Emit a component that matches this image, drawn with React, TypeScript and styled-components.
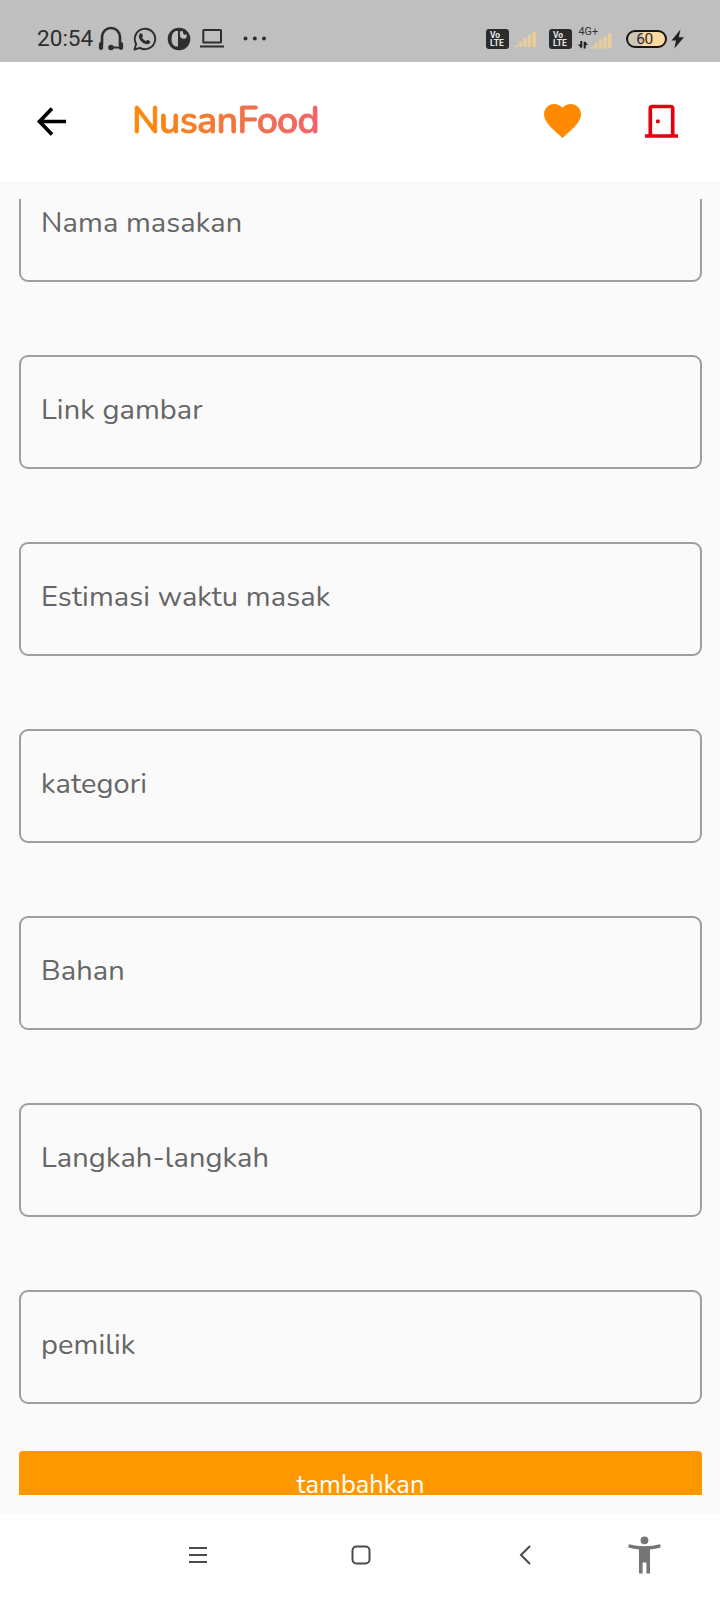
import React from 'react';
import styled, { createGlobalStyle } from 'styled-components';

const GlobalStyle = createGlobalStyle`
  * { box-sizing: border-box; }
  body { margin: 0; background: #fff; }
`;

const Screen = styled.div`
  width: 720px;
  height: 1600px;
  display: flex;
  flex-direction: column;
  overflow: hidden;
  background: #fff;
  font-family: Nunito, Lato, 'Open Sans', sans-serif;
`;

const StatusBar = styled.header`
  height: 62px;
  flex: none;
  display: flex;
  align-items: center;
  justify-content: space-between;
  padding: 15px 35px 0 37px;
  background: #bfbfbf;
  color: #2e2e2e;
  font-family: Roboto, sans-serif;
`;

const StatusGroup = styled.div`
  display: flex;
  align-items: center;
`;

const Clock = styled.time`
  width: 61px;
  font-size: 22.6px;
  line-height: 26px;
`;

const Icon = styled.svg<{ $gap?: number }>`
  display: block;
  flex: none;
  margin-left: ${(p) => p.$gap ?? 0}px;
`;

const VolteBadge = styled.span<{ $gap?: number }>`
  width: 23px;
  height: 20px;
  margin-left: ${(p) => p.$gap ?? 0}px;
  padding: 2px 0 0 4px;
  border-radius: 3px;
  background: #2c2c2c;
  color: #e6e6e6;
  font: 700 8.5px/8px Roboto, sans-serif;
  white-space: pre;
`;

const Battery = styled.span`
  width: 41px;
  height: 18px;
  margin-left: 13px;
  border: 2.5px solid #161616;
  border-radius: 9px;
  background: linear-gradient(90deg, #cdc5b5 0 38%, #fbd9a0 38%);
  color: #2a2a2a;
  font: 400 15.5px/14px Roboto, sans-serif;
  letter-spacing: -0.4px;
  text-align: center;
  padding-right: 4px;
`;

const AppBar = styled.div`
  height: 119px;
  flex: none;
  display: flex;
  align-items: center;
  padding: 0 42px 2px 36px;
`;

const Title = styled.h1`
  margin: 1px auto 0 62px;
  padding: 0 3px;
  font-size: 37.5px;
  line-height: 48px;
  font-weight: 600;
  letter-spacing: -0.75px;
  color: transparent;
  -webkit-text-stroke: 0.8px transparent;
  background: linear-gradient(90deg, #ff8a00, #ee704f 65%, #f4606a);
  background-clip: text;
  -webkit-background-clip: text;
`;

const IconButton = styled.button<{ $gap?: number }>`
  display: block;
  padding: 0;
  border: 0;
  background: none;
  margin-left: ${(p) => p.$gap ?? 0}px;
`;

const Content = styled.main`
  height: 1332px;
  flex: none;
  padding: 18px 18px 18px 19px;
  background: #fafafa;
`;

const ScrollArea = styled.form`
  height: 100%;
  overflow: hidden;
  display: flex;
  flex-direction: column;
`;

const FieldList = styled.div`
  display: flex;
  flex-direction: column;
  gap: 73px;
  margin-top: -31px;
`;

const Field = styled.label`
  height: 114px;
  flex: none;
  padding: 36px 20px;
  border: 2px solid #9e9e9e;
  border-radius: 9px;
  color: #666;
  font-size: 29px;
  line-height: 34px;
  letter-spacing: 0.09px;
`;

const SubmitButton = styled.button`
  height: 72px;
  flex: none;
  margin-top: 47px;
  padding: 0 0 5px;
  border: 0;
  border-radius: 4px;
  background: #ff9800;
  color: #fff;
  font: 400 25.5px/30px Nunito, Lato, sans-serif;
`;

const NavBar = styled.nav`
  height: 87px;
  flex: none;
  display: flex;
  align-items: center;
  padding: 0 59px 4px 188px;
`;

const fields = [
  'Nama masakan',
  'Link gambar',
  'Estimasi waktu masak',
  'kategori',
  'Bahan',
  'Langkah-langkah',
  'pemilik',
];

const Headphones = () => (
  <Icon width="26" height="26" viewBox="0 0 26 26" fill="none" stroke="#2e2e2e">
    <path d="M4 19V11a9 9 0 0 1 18 0v8" strokeWidth="2.6" />
    <path d="M3 18v4M23 18v4" strokeWidth="4.2" strokeLinecap="round" />
    <path d="M13 21.500h9" strokeWidth="2" />
    <circle cx="13" cy="21.500" r="2.800" fill="#2e2e2e" stroke="none" />
  </Icon>
);

const WhatsApp = () => (
  <Icon $gap={9} width="24" height="24" viewBox="0 0 24 24">
    <path
      fill="none"
      stroke="#2e2e2e"
      strokeWidth="1.9"
      strokeLinejoin="round"
      d="M1.500 22.500l1.600-5.600a10.200 10.200 0 1 1 3.900 3.900z"
    />
    <path
      fill="#2e2e2e"
      d="M7.200 6.500c.5-.5 1.500-.5 1.800.2l.9 2.100c.2.5-.2 1-.8 1.700.9 1.700 2.200 2.900 4 3.700.6-.7 1-1.400 1.600-1.100l2.100 1c.6.3.5 1.300 0 2-1 1.200-2.500 1.500-4 1-3.200-1-5.700-3.300-6.700-6.200-.5-1.700 0-3.500 1.100-4.400z"
    />
  </Icon>
);

const DiscIcon = () => (
  <Icon $gap={9.5} width="24" height="24" viewBox="0 0 24 24">
    <circle cx="12" cy="12" r="11.300" fill="#2e2e2e" />
    <path d="M11 4v15.500H8.500Q4.500 18 4.500 12T8.500 4z" fill="#bfbfbf" />
    <path d="M13 4.200h3v1.300a2 2 0 0 0 3.500 1.500Q20.500 11.500 17 11.800Q13 11.800 13 8z" fill="#bfbfbf" />
  </Icon>
);

const Laptop = () => (
  <Icon $gap={9.5} width="24" height="24" viewBox="0 0 24 24" fill="none" stroke="#2e2e2e" strokeWidth="2">
    <rect x="3.300" y="3" width="17.700" height="12.500" rx="0.600" />
    <path d="M0 19.500h24" />
  </Icon>
);

const Dots = () => (
  <Icon $gap={17.5} width="26" height="24" viewBox="0 0 26 24" fill="#2e2e2e">
    <circle cx="3.500" cy="11.500" r="2" />
    <circle cx="12.800" cy="11.500" r="2" />
    <circle cx="22" cy="11.500" r="2" />
  </Icon>
);

const bars = (
  <g fill="#e9cd9a">
    <path d="M0 18l4-3v3z" />
    <rect x="5" y="12.500" width="3.300" height="5.500" />
    <rect x="9.400" y="9" width="3.300" height="9" />
    <rect x="13.800" y="6" width="3.300" height="12" />
    <rect x="18.200" y="3" width="4" height="15" />
  </g>
);

const Signal = () => (
  <Icon $gap={5} width="24" height="20" viewBox="0 0 24 20">{bars}</Icon>
);

const MobileData = () => (
  <Icon $gap={6} width="35" height="28" viewBox="0 -2 35 28">
    <g transform="translate(11.500 3.500)">{bars}</g>
    <text x="0.500" y="8.300" fontFamily="Roboto, sans-serif" fontSize="10.800" fill="#333">4G+</text>
    <path d="M3.300 14V20.500M6.700 21.500v-6.500" stroke="#222" strokeWidth="2" />
    <path d="M0 17.500l3.300 4V17.500zM10 18l-3.300-4V18z" fill="#222" />
  </Icon>
);

const Bolt = () => (
  <Icon $gap={4} width="14" height="20" viewBox="0 0 14 20">
    <path d="M9.500.500L.5 11.500h4.500L3.300 19.500 13 8.300H7.800z" fill="#222" />
  </Icon>
);

export default function App() {
  return (
    <Screen>
      <GlobalStyle />
      <StatusBar>
        <StatusGroup>
          <Clock>20:54</Clock>
          <Headphones />
          <WhatsApp />
          <DiscIcon />
          <Laptop />
          <Dots />
        </StatusGroup>
        <StatusGroup>
          <VolteBadge>{'Vo\nLTE'}</VolteBadge>
          <Signal />
          <VolteBadge $gap={11}>{'Vo\nLTE'}</VolteBadge>
          <MobileData />
          <Battery>60</Battery>
          <Bolt />
        </StatusGroup>
      </StatusBar>

      <AppBar>
        <IconButton type="button" aria-label="Kembali">
          <Icon width="31" height="32" viewBox="0 0 31 32" fill="none" stroke="#000" strokeWidth="3.700">
            <path d="M30 16.500H4M16 3.500L3.500 16.500l12.500 13" />
          </Icon>
        </IconButton>
        <Title>NusanFood</Title>
        <IconButton type="button" aria-label="Favorit">
          <Icon width="37" height="34" viewBox="2 3 20 18.350" preserveAspectRatio="none" fill="#ff8a00">
            <path d="M12 21.350l-1.450-1.320C5.400 15.360 2 12.280 2 8.500 2 5.420 4.420 3 7.500 3c1.740 0 3.410.81 4.500 2.090C13.090 3.810 14.760 3 16.500 3 19.580 3 22 5.420 22 8.500c0 3.780-3.400 6.860-8.550 11.540L12 21.350z" />
          </Icon>
        </IconButton>
        <IconButton type="button" aria-label="Keluar" $gap={64}>
          <Icon width="33" height="34" viewBox="0 0 33 34" fill="none" stroke="#e4000f">
            <path d="M5.300 32V4.500a2 2 0 0 1 2-2h18.400a2 2 0 0 1 2 2V32" strokeWidth="3.700" />
            <path d="M0 32h33" strokeWidth="3.700" />
            <rect x="11" y="15.500" width="3.700" height="3.700" rx="1" fill="#e4000f" stroke="none" />
          </Icon>
        </IconButton>
      </AppBar>

      <Content>
        <ScrollArea>
          <FieldList>
            {fields.map((label) => (
              <Field key={label}>{label}</Field>
            ))}
          </FieldList>
          <SubmitButton type="button">tambahkan</SubmitButton>
        </ScrollArea>
      </Content>

      <NavBar>
        <Icon width="20" height="18" viewBox="0 0 20 18" stroke="#4a4a4a" strokeWidth="2">
          <path d="M1 2h18M1 9h18M1 16h18" />
        </Icon>
        <Icon $gap={143} width="20" height="20" viewBox="0 0 20 20" fill="none" stroke="#4a4a4a" strokeWidth="2">
          <rect x="1.500" y="1.500" width="17" height="17" rx="4" />
        </Icon>
        <Icon $gap={148} width="12" height="20" viewBox="0 0 12 20" fill="none" stroke="#4a4a4a" strokeWidth="2">
          <path d="M11 1L2 10l9 9" />
        </Icon>
        <Icon $gap={97} width="33" height="38" viewBox="0 0 33 38" fill="#757575">
          <circle cx="16.500" cy="4.300" r="3.900" />
          <path d="M.8 8.300Q16.500 12.300 32.200 8.300L32.700 11.400Q27 13 22 13.400V37.500H18.400V26.500H14.600V37.500H11V13.400Q6 13 .3 11.400z" />
        </Icon>
      </NavBar>
    </Screen>
  );
}
